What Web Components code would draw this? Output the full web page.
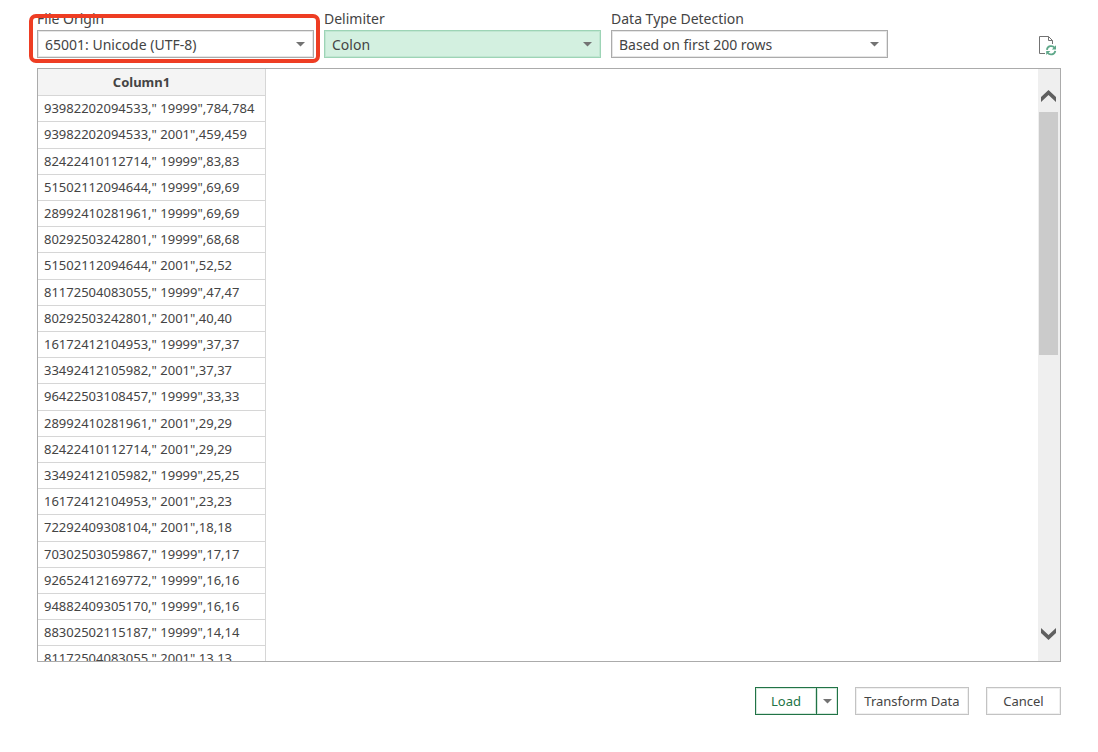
<!DOCTYPE html>
<html lang="en">
<head>
<meta charset="utf-8">
<title>Data preview</title>
<style>
html, body { margin: 0; height: 100%; }
body { background: #fff; color: #444; font: 14px/20px "Noto Sans", "Open Sans", sans-serif; }
</style>
</head>
<body>
<import-dialog></import-dialog>
<script>
const arrow = '<svg class="arrow" width="9" height="5" viewBox="0 0 9 5" aria-hidden="true"><path d="M0 0H9L4.500 4.500Z" fill="#737373"/></svg>';

customElements.define('select-field', class extends HTMLElement {
  connectedCallback() {
    const root = this.attachShadow({ mode: 'open' });
    root.innerHTML = `<style>
      :host { display: block; flex: 0 1 277px; min-width: 0; position: relative;
        --edge: #ababab; --inner: #e6e6e6; --fill: #fff; }
      :host([active]) { --edge: #9dd4b6; --inner: #c0e6d1; --fill: #d3f0e0; }
      label { display: block; line-height: 20px; white-space: nowrap; }
      .box { display: grid; align-items: center; margin-top: 1px; }
      select { grid-area: 1 / 1; appearance: none; width: 100%; height: 28px; box-sizing: border-box; margin: 0;
        padding: 2px 24px 0 7px; border: 1px solid var(--edge); border-radius: 0; background: var(--fill);
        box-shadow: inset 0 0 0 1px var(--inner); color: inherit; font: inherit; }
      .arrow { grid-area: 1 / 1; justify-self: end; margin-right: 9px; pointer-events: none; }
    </style>
    <label for="s">${this.getAttribute('label')}</label>
    <div class="box"><select id="s"><option>${this.getAttribute('value')}</option></select>${arrow}</div>
    <slot></slot>`;
  }
});

customElements.define('callout-frame', class extends HTMLElement {
  connectedCallback() {
    this.attachShadow({ mode: 'open' }).innerHTML = `<style>
      :host { position: absolute; inset: 5px -6px -5px -8px; box-sizing: border-box;
        border: 4px solid #ee3d23; border-radius: 7px; pointer-events: none; }
    </style>`;
  }
});

customElements.define('refresh-button', class extends HTMLElement {
  connectedCallback() {
    this.attachShadow({ mode: 'open' }).innerHTML = `<style>
      :host { display: block; margin-left: auto; }
      button { display: block; margin: 0; padding: 0; border: 0; background: none; }
      svg { display: block; }
    </style>
    <button type="button" aria-label="Refresh"><svg width="18" height="20" viewBox="0 0 18 20" fill="none">
      <path d="M6 17.500H.5V.5H9.500L13.500 4.500V8M9.500 .5V4.500H13.500" stroke="#737373"/>
      <g stroke="#5fa88a" stroke-width="1.800"><path d="M7.900 13.800A4.300 4.300 0 0 1 15.600 11.800"/><path d="M16.300 14.800A4.300 4.300 0 0 1 8.600 16.700"/></g>
      <path d="M17 9.300V13.500H12.800ZM7.200 19V15H11.400Z" fill="#5fa88a"/>
    </svg></button>`;
  }
});

customElements.define('preview-table', class extends HTMLElement {
  connectedCallback() {
    const rows = this.textContent.trim().split('\n').map(r => `<tr><td>${r.trim()}</td></tr>`).join('');
    this.attachShadow({ mode: 'open' }).innerHTML = `<style>
      :host { display: block; flex: 1; min-width: 0; overflow: hidden; }
      table { border-collapse: separate; border-spacing: 0; font-size: 13px; line-height: 18px; }
      th, td { height: 26px; box-sizing: border-box; border: solid #d6d6d6; border-width: 0 1px 1px 0;
        min-width: 228px; white-space: nowrap; text-align: left; }
      td { padding: 0 6px 2px; }
      tr:nth-child(5n+2) td { height: 27px; }
      th { height: 27px; text-align: center; background: #f4f4f4; padding: 0 20px 0 0; }
    </style>
    <table><thead><tr><th scope="col">Column1</th></tr></thead><tbody>${rows}</tbody></table>`;
  }
});

customElements.define('scroll-rail', class extends HTMLElement {
  connectedCallback() {
    const chevron = d => `<svg width="15" height="12" viewBox="0 0 15 12" aria-hidden="true"><path d="${d}" fill="#606060"/></svg>`;
    this.attachShadow({ mode: 'open' }).innerHTML = `<style>
      :host { display: flex; flex-direction: column; flex: 0 0 22px; background: #efefef; }
      button { display: flex; justify-content: center; height: 43px; margin: 0; padding: 0 2px 0 0; border: 0; background: none; }
      .up { align-items: end; padding-bottom: 10px; }
      .down { align-items: start; padding-top: 10px; }
      .track { flex: 1; padding: 0 2px 0 1px; }
      .thumb { height: 48%; background: #cbcbcb; }
    </style>
    <button type="button" class="up" aria-label="Scroll up">${chevron('M7.5 0L15 7V12L7.5 5L0 12V7Z')}</button>
    <div class="track"><div class="thumb"></div></div>
    <button type="button" class="down" aria-label="Scroll down">${chevron('M7.5 12L15 5V0L7.5 7L0 0V5Z')}</button>`;
  }
});

customElements.define('action-bar', class extends HTMLElement {
  connectedCallback() {
    this.attachShadow({ mode: 'open' }).innerHTML = `<style>
      :host { display: flex; justify-content: flex-end; gap: 17px; }
      button { height: 28px; box-sizing: border-box; margin: 0; padding: 0; border: 1px solid #c3c3c3; background: #fff;
        box-shadow: inset 0 0 0 1px #f0f0f0; color: inherit; font: 13px/18px "Noto Sans", "Open Sans", sans-serif; }
      .split { display: flex; }
      .split button { border-color: #217346; box-shadow: inset 0 0 0 1px #d5e8dd; }
      .split .load { width: 62px; color: #217346; }
      .split .more { width: 21px; border-left: 0; display: grid; place-items: center; }
      .transform { width: 114px; }
      .cancel { width: 75px; }
    </style>
    <div class="split"><button type="button" class="load">Load</button><button type="button" class="more" aria-label="More load options">${arrow}</button></div>
    <button type="button" class="transform">Transform Data</button>
    <button type="button" class="cancel">Cancel</button>`;
  }
});

customElements.define('import-dialog', class extends HTMLElement {
  connectedCallback() {
    this.attachShadow({ mode: 'open' }).innerHTML = `<style>
      :host { display: flex; flex-direction: column; box-sizing: border-box; height: 100vh; padding: 9px 37px 37px; }
      header { display: flex; gap: 10px; align-items: center; }
      refresh-button { padding: 24px 4px 0 0; }
      main { display: flex; flex: 1; min-height: 0; margin: 10px 0 25px; border: 1px solid #ababab; }
    </style>
    <header>
      <select-field label="File Origin" value="65001: Unicode (UTF-8)"><callout-frame></callout-frame></select-field>
      <select-field label="Delimiter" value="Colon" active></select-field>
      <select-field label="Data Type Detection" value="Based on first 200 rows"></select-field>
      <refresh-button></refresh-button>
    </header>
    <main><preview-table>
      93982202094533," 19999",784,784
      93982202094533," 2001",459,459
      82422410112714," 19999",83,83
      51502112094644," 19999",69,69
      28992410281961," 19999",69,69
      80292503242801," 19999",68,68
      51502112094644," 2001",52,52
      81172504083055," 19999",47,47
      80292503242801," 2001",40,40
      16172412104953," 19999",37,37
      33492412105982," 2001",37,37
      96422503108457," 19999",33,33
      28992410281961," 2001",29,29
      82422410112714," 2001",29,29
      33492412105982," 19999",25,25
      16172412104953," 2001",23,23
      72292409308104," 2001",18,18
      70302503059867," 19999",17,17
      92652412169772," 19999",16,16
      94882409305170," 19999",16,16
      88302502115187," 19999",14,14
      81172504083055," 2001",13,13
    </preview-table><scroll-rail></scroll-rail></main>
    <action-bar></action-bar>`;
  }
});
</script>
</body>
</html>
